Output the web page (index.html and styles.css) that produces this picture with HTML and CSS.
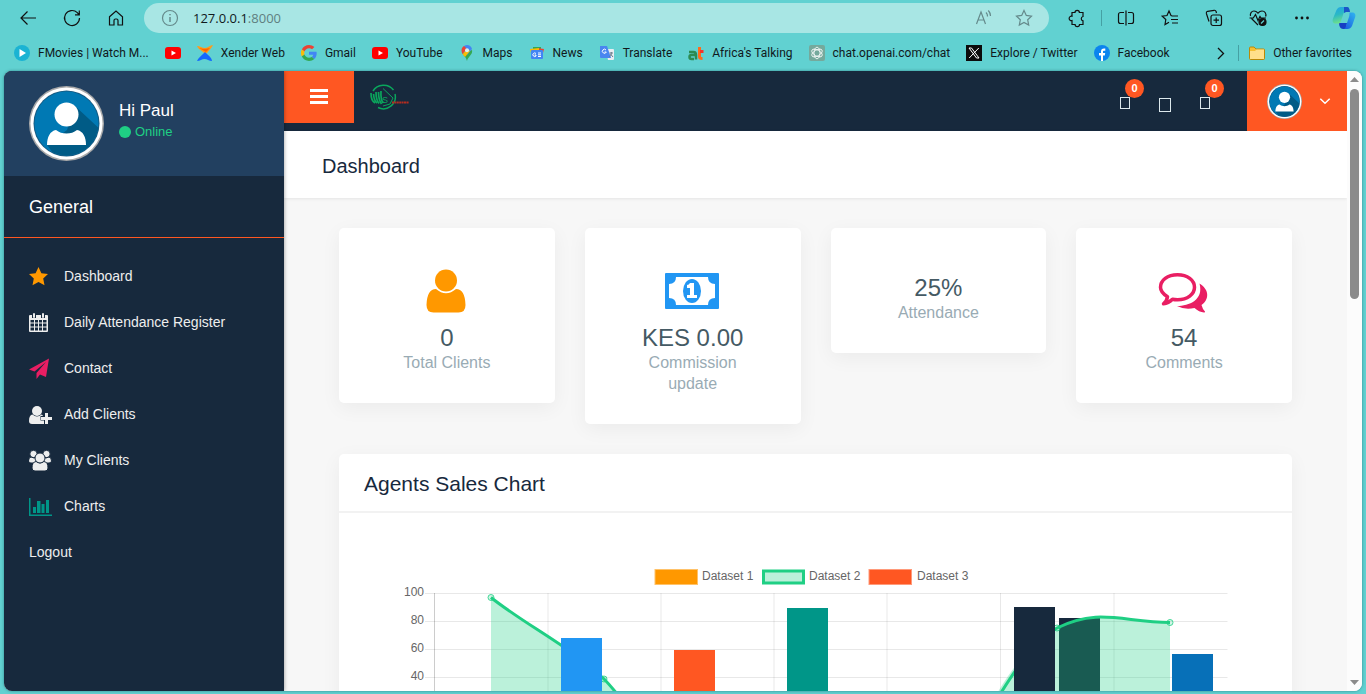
FILE: index.html
```html
<!DOCTYPE html>
<html lang="en">
<head>
<meta charset="utf-8">
<title>Dashboard</title>
<link rel="stylesheet" href="styles.css">
</head>
<body>
<svg class="defs" width="0" height="0" aria-hidden="true">
  <defs>
    <clipPath id="disc"><circle cx="37.5" cy="37.5" r="32"/></clipPath>
    <linearGradient id="co1" x1="0" y1="0" x2="0.3" y2="1"><stop offset="0" stop-color="#1fa3e8"/><stop offset="0.5" stop-color="#2bb9c4"/><stop offset="1" stop-color="#6fe08a"/></linearGradient>
    <linearGradient id="co2" x1="1" y1="0" x2="0.2" y2="1"><stop offset="0" stop-color="#2fb6f0"/><stop offset="1" stop-color="#1b5fe0"/></linearGradient>
    <symbol id="avatar" viewBox="0 0 75 75">
      <circle cx="37.5" cy="37.5" r="37.5" fill="#a9a9a9"/>
      <circle cx="37.5" cy="37.5" r="36" fill="#fff"/>
      <circle cx="37.5" cy="37.5" r="33" fill="#155b83"/>
      <circle cx="37.5" cy="37.5" r="32" fill="#0079b4"/>
      <path clip-path="url(#disc)" fill="#005b86" d="M46 20 75 47V75H30L18 59 38 44z"/>
      <circle cx="37.5" cy="28.500" r="12" fill="#fff"/>
      <path fill="#fff" d="M18 59c0-8 3-14 9-15 3 2.500 6.500 3.500 10.500 3.500S45 46.500 48 44c6 1 9 7 9 15z"/>
    </symbol>
    <symbol id="yt" viewBox="0 0 16 16"><rect y="2" width="16" height="12" rx="3" fill="#f00"/><path d="M6.500 5.500v5L11 8z" fill="#fff"/></symbol>
  </defs>
</svg>

<header class="browser">
  <div class="toolbar">
    <div class="tools">
      <button class="tool" aria-label="Back"><svg viewBox="0 0 20 20"><path d="M18 10H3M9.500 3.500 3 10l6.500 6.500"/></svg></button>
      <button class="tool" aria-label="Refresh"><svg viewBox="0 0 20 20"><path d="M17.500 10a7.500 7.500 0 1 1-2.200-5.300L17 6.500M17.300 2.500v4.300H13"/></svg></button>
      <button class="tool" aria-label="Home"><svg viewBox="0 0 20 20"><path d="M3.500 8.800 10 3l6.500 5.800V17H12v-4.500a1.500 1.500 0 0 0-1.500-1.500h-1A1.500 1.500 0 0 0 8 12.500V17H3.500z"/></svg></button>
    </div>
    <div class="address">
      <svg class="muted" viewBox="0 0 20 20"><circle cx="10" cy="10" r="7.500"/><path d="M10 9v5M10 6v1.300" stroke-width="1.500"/></svg>
      <a class="url" href="http://127.0.0.1:8000/">127.0.0.1<span>:8000</span></a>
      <button class="tool muted" aria-label="Read aloud"><svg viewBox="0 0 20 20"><path d="M2.500 16 7 4l4.500 12M4 12h6M12 4.500a5 5 0 0 1 1.500 4M14.300 2.500A8 8 0 0 1 16.500 8"/></svg></button>
      <button class="tool muted" aria-label="Add to favorites"><svg viewBox="0 0 20 20"><path d="m10 2.500 2.300 4.900 5.200.7-3.800 3.700 1 5.300L10 14.500l-4.700 2.600 1-5.300L2.500 8.100l5.200-.7z"/></svg></button>
    </div>
    <div class="tools">
      <button class="tool" aria-label="Extensions"><svg viewBox="0 0 20 20"><path d="M5 4.500h3a2.200 2.200 0 0 1 4.400 0H16v4a2.200 2.200 0 0 0 0 4.300v3.700h-3.500a2.200 2.200 0 0 1-4.400 0H5v-4a2.200 2.200 0 1 1 0-4.200z"/></svg></button>
      <span class="divider"></span>
      <button class="tool" aria-label="Split screen"><svg viewBox="0 0 20 20"><path d="M8 4.500H4.500a2 2 0 0 0-2 2v7a2 2 0 0 0 2 2H8M12 4.500h3.500a2 2 0 0 1 2 2v7a2 2 0 0 1-2 2H12M10 2.500v15"/></svg></button>
      <button class="tool" aria-label="Favorites"><svg viewBox="0 0 20 20"><path d="M12 7.800 11 7.500 9 3 7 7.500l-4.800.6L5.800 11.500 5 16.500l4-2.300M11.500 8H18M11 11.500H18M12 15h6"/></svg></button>
      <button class="tool" aria-label="Collections"><svg viewBox="0 0 20 20"><rect x="7" y="7" width="10.500" height="10.500" rx="2"/><path d="M12.200 9.500v5.500M9.500 12.200H15M5 13.500l-2.600-8a1.800 1.800 0 0 1 1.200-2.200l6.500-1a1.800 1.800 0 0 1 2 1.200l.4 1.500"/></svg></button>
      <button class="tool" aria-label="Browser essentials"><svg viewBox="0 0 20 20"><path d="M10 17 3.500 10.500M2.500 8C1.800 5.500 3.500 3 6 3c2 0 3 1 4 2.200C11 4 12 3 14 3c3 0 4.600 2.700 3.600 5.500M1.500 10h3.800L7.500 6.500 10 12.500l2-4 1 1.500h5"/><circle cx="14.500" cy="14" r="3.500" fill="#111"/><path d="m13 15.500 3-3" stroke="#61d1d1"/></svg></button>
      <button class="tool" aria-label="More"><svg viewBox="0 0 20 20"><g fill="#111" stroke="none"><circle cx="4.500" cy="10" r="1.400"/><circle cx="10" cy="10" r="1.400"/><circle cx="15.500" cy="10" r="1.400"/></g></svg></button>
      <button class="copilot" aria-label="Copilot"><svg viewBox="0 0 24 24"><path fill="#173fc4" d="M7 17h8l-1 6h-3c-2.500 0-4-3-4-6z"/><path fill="url(#co1)" d="M9 1h6c2 0 2.500 2 3 5h-4c-2 0-2.500 1-3 3l-2 6c-.6 2-1.500 2.500-3 2.500H4c-3 0-4-2-3-5L4.500 4C5.500 2 7 1 9 1z"/><path fill="#1a55c8" d="M12 1h3c2 0 2.500 2 3 5h-4l-2 1z"/><path fill="url(#co2)" d="M17.500 6.500H20c3 0 4 2 3 5l-3 8.500c-1 2-2.500 3-4.500 3H11c2 0 2.500-1 3-3l3-9c.6-2 .5-3 .5-4.500z"/></svg></button>
    </div>
  </div>
  <nav class="bookmarks" aria-label="Favorites bar">
    <a href="#"><svg viewBox="0 0 16 16"><circle cx="8" cy="8" r="8" fill="#1bb3d3"/><path d="M5.500 4v8L12 8z" fill="#fff"/></svg>FMovies | Watch M...</a>
    <a href="#" aria-label="YouTube"><svg><use href="#yt"/></svg></a>
    <a href="#"><svg viewBox="0 0 16 16"><path fill="#ff9c1a" d="M0 1c3 0 5 2 8 2s5-3 8-3c-1 3-4 5-6 8L8 9 6 7C4 5 1 4 0 1z"/><path fill="#f60" d="M2 3c3 1 8 1 11 0L9 7z"/><path fill="#1469ff" d="M0 16c1-3 4-5 6-7l2-2 2 2c2 2 5 4 5 7-3 0-5-2-7.500-2S3 16 0 16z"/></svg>Xender Web</a>
    <a href="#"><svg viewBox="0 0 48 48"><path fill="#ea4335" d="M24 9.500c3.500 0 6.700 1.200 9.200 3.600l6.900-6.900C35.900 2.400 30.500 0 24 0 14.600 0 6.500 5.400 2.600 13.200l8 6.200C12.400 13.700 17.700 9.500 24 9.500z"/><path fill="#4285f4" d="M47 24.500c0-1.600-.2-3.100-.4-4.500H24v9h12.900c-.6 3-2.300 5.500-4.800 7.200l7.700 6C44.400 38 47 31.800 47 24.500z"/><path fill="#fbbc05" d="M10.500 28.600a14.500 14.500 0 0 1 0-9.200l-8-6.200a24 24 0 0 0 0 21.600z"/><path fill="#34a853" d="M24 48c6.500 0 11.900-2.100 15.900-5.800l-7.700-6c-2.200 1.500-4.900 2.300-8.200 2.300-6.300 0-11.600-4.200-13.500-9.900l-8 6.200C6.500 42.600 14.600 48 24 48z"/></svg>Gmail</a>
    <a href="#"><svg><use href="#yt"/></svg>YouTube</a>
    <a href="#"><svg viewBox="0 0 16 16"><path fill="#34a853" d="M13 5c1 5-4 6-5 11C7 12 5 11 3.500 8.500z"/><path fill="#4285f4" d="M5 1c3-2 7-1 8 3L8 10z"/><path fill="#fbbc04" d="M3.500 9 9 4l2 2-5 6z"/><path fill="#ea4335" d="M5 1C2 3 2 6 3.500 9L8 4z"/><circle cx="8" cy="5.300" r="2" fill="#d9f4f4"/></svg>Maps</a>
    <a href="#"><svg viewBox="0 0 16 16"><path fill="#34a853" d="M4 2h8v5H4z"/><path fill="#ea4335" d="m8 3 7 1-1 4z"/><path fill="#fbbc04" d="m1 4 9-1v5H2z"/><rect x="2" y="5" width="12" height="9" rx="1" fill="#4285f4"/><path fill="none" stroke="#fff" d="M7 8.500a1.800 1.800 0 1 0 0 2.500V10H5.500M9 8h3M9 9.800h3M9 11.500h3"/></svg>News</a>
    <a href="#"><svg viewBox="0 0 16 16"><path fill="#e8edf3" d="M7 4h7a1 1 0 0 1 1 1v9a1 1 0 0 1-1 1H9z"/><path fill="#4a86f0" d="M1 1h7l4 12H2a1 1 0 0 1-1-1z"/><path fill="none" stroke="#fff" d="M7 5a2 2 0 1 0 .3 2H5.500"/><path fill="none" stroke="#697d8c" d="M10.500 8H14M12.300 7v1c0 2-1 3-2 4M11.500 9l2.500 3"/></svg>Translate</a>
    <a href="#"><svg viewBox="0 0 16 16"><path fill="none" stroke="#2c8b52" stroke-width="2.500" d="M1 7h4.500Q8 7 8 10v4.500M8 10H3.500a2 2 0 0 0 0 4H6"/><path fill="none" stroke="#ff6b1a" stroke-width="3" d="M11.500 2v10c0 1.500 1 1.500 3 1.500"/><path stroke="#f5352b" stroke-width="3" d="M12 6.500h3.500"/></svg>Africa's Talking</a>
    <a href="#"><svg viewBox="0 0 16 16"><rect width="16" height="16" rx="2" fill="#75a99c"/><g fill="none" stroke="#fff" stroke-width=".8"><ellipse cx="8" cy="8" rx="3" ry="5.800"/><ellipse cx="8" cy="8" rx="3" ry="5.800" transform="rotate(60 8 8)"/><ellipse cx="8" cy="8" rx="3" ry="5.800" transform="rotate(120 8 8)"/></g></svg>chat.openai.com/chat</a>
    <a href="#"><svg viewBox="0 0 16 16"><rect width="16" height="16" fill="#0b0b0b"/><path fill="none" stroke="#fff" d="M3 3h2.500L13 13h-2.500zM12.800 3 3.200 13"/></svg>Explore / Twitter</a>
    <a href="#"><svg viewBox="0 0 16 16"><circle cx="8" cy="8" r="8" fill="#0b84ee"/><path fill="#fff" d="M7 16v-5.500H5V8h2V6.500C7 4.500 8 3.500 10 3.500h1.300v2.200H10c-.7 0-1 .3-1 1V8h2.200l-.4 2.500H9V16z"/></svg>Facebook</a>
    <span class="overflow">
      <button class="more" aria-label="More favorites"><svg viewBox="0 0 10 16"><path d="m2 3 5.500 5.500L2 14"/></svg></button>
      <span class="divider"></span>
      <a href="#"><svg viewBox="0 0 16 16"><path fill="#f5c033" stroke="#b98908" d="M.5 3a1 1 0 0 1 1-1H5l2 2h7.500a1 1 0 0 1 1 1v8.500a1 1 0 0 1-1 1h-13a1 1 0 0 1-1-1z"/><path fill="#ffe08a" d="M1 6h5l1.500-1.500H15V14H1z"/></svg>Other favorites</a>
    </span>
  </nav>
</header>

<div class="page">
  <aside class="sidebar">
    <div class="profile">
      <svg class="avatar" role="img" aria-label="Paul"><use href="#avatar"/></svg>
      <div>
        <div class="greeting">Hi Paul</div>
        <div class="status">Online</div>
      </div>
    </div>
    <h2 class="group">General</h2>
    <nav class="menu">
      <a href="#"><svg viewBox="0 -1 24 24"><path fill="#ff9800" d="m9.500 2 2.900 6.200 6.600.8-4.800 4.600 1.300 6.600-6-3.300-6 3.300 1.300-6.600L0 9l6.600-.8z"/></svg>Dashboard</a>
      <a href="#"><svg viewBox="0 -1 24 24"><path fill="#eee" fill-rule="evenodd" d="M1 4h2v3h4V4h5v3h4V4h2q1 0 1 1v15q0 1-1 1H1q-1 0-1-1V5q0-1 1-1zm.5 5v2.500H5V9zM6 9v2.500h3V9zm4 0v2.500h3V9zm4 0v2.500h3.500V9zM1.500 12.500v3H5v-3zm4.500 0v3h3v-3zm4 0v3h3v-3zm4 0v3h3.500v-3zM1.500 16.500v3H5v-3zm4.500 0v3h3v-3zm4 0v3h3v-3zm4 0v3h3.500v-3z"/><rect x="4" y="2" width="2" height="5" rx="1" fill="#eee"/><rect x="13" y="2" width="2" height="5" rx="1" fill="#eee"/></svg>Daily Attendance Register</a>
      <a href="#"><svg viewBox="0 -1 24 24"><path fill="#e91e63" d="M20 1.500 17 20l-6-2.500L7.500 22V16L17 5 5.500 14.500 0 12.500z"/></svg>Contact</a>
      <a href="#"><svg viewBox="0 -1 24 24"><circle cx="8" cy="8" r="5" fill="#eee"/><path fill="#eee" d="M3.500 11.500Q8 15.500 12.500 11.500q1 .3 1.500 1.500h-2.500v4.500H15V21H3q-3 0-3-3 0-6 3.500-6.500z"/><path fill="#eee" d="M16 10h3v4h4v3h-4v4h-3v-4h-4v-3h4z"/></svg>Add Clients</a>
      <a href="#"><svg viewBox="0 -1 24 24"><g fill="#eee" stroke="#17293d"><circle cx="4.500" cy="5" r="3.700"/><circle cx="17.500" cy="5" r="3.700"/><path d="M2 8q3 2 6 0v6H2q-2.500 0-2.500-2Q-.5 8.500 2 8zM20 8q-3 2-6 0v6h6q2.500 0 2.500-2 0-3.500-2.500-4z"/><path d="M7 12.500q4 3 8 0 4 .5 4 6.500 0 3-3 3H6q-3 0-3-3 0-6 4-6.500z"/><circle cx="11" cy="9" r="5"/></g></svg>My Clients</a>
      <a href="#"><svg viewBox="0 -1 24 24"><path fill="#009688" d="M0 3h1.500v16.500H23V21H0zm4 9h3v6H4zm4-6h3.500v12H8zm4.500 3h3v9h-3zM17 5h3v13h-3z"/></svg>Charts</a>
      <a href="#">Logout</a>
    </nav>
  </aside>

  <main class="content">
    <div class="topbar">
      <button class="toggle" aria-label="Toggle menu"><svg viewBox="0 0 18 16"><path fill="#fff" d="M0 0h18v3H0zm0 6h18v3H0zm0 6h18v3H0z"/></svg></button>
      <svg class="logo" viewBox="0 0 40 27" role="img" aria-label="Logo"><g fill="none" stroke="#0aa65c"><path stroke-width="1.500" d="M3 8A12 11 0 0 1 23.500 7M25 11A12 12 0 0 1 8 24.500"/><path stroke-width="1.700" d="M1 10Q1 18 5 20M3.500 11Q4 18 7 20M6 9Q6 17 9 20.500M8.500 9Q8.500 17 11.500 21M11 8Q10.500 16 13 20"/><path d="M13 5.500 23 15l-3 6-7 2"/></g><text x="12" y="20" class="logo-s">S</text><path stroke="#b32d20" stroke-width="2" stroke-dasharray="2 .4" d="M22 19.500h17"/></svg>
      <div class="alerts">
        <button aria-label="Notifications"><i class="glyph"></i><span class="badge">0</span></button>
        <button aria-label="Settings"><i class="glyph large"></i></button>
        <button aria-label="Messages"><i class="glyph"></i><span class="badge">0</span></button>
      </div>
      <button class="account" aria-label="Account menu"><svg class="avatar-small"><use href="#avatar"/></svg><svg class="chevron" viewBox="0 0 10 6"><path d="m.3.7 4.700 4.600L9.700.7"/></svg></button>
    </div>
    <h1 class="title">Dashboard</h1>
    <div class="body">
      <section class="cards">
        <article class="card">
          <svg class="card-icon" viewBox="1 -1 56 44"><g fill="#ff9800"><circle cx="28" cy="11.500" r="11"/><path d="M18 20q10 8.500 20 0 9 0 9.500 16 0 7.500-7 7.500h-25q-7 0-7-7.500Q9 20 18 20z"/></g></svg>
          <div class="number">0</div><div class="label">Total Clients</div>
        </article>
        <article class="card">
          <svg class="card-icon" viewBox="1 0 56 44"><path fill="#2196f3" fill-rule="evenodd" d="M2 5h52q1 0 1 1v34q0 1-1 1H2q-1 0-1-1V6q0-1 1-1zm10 4q0 7-7 7v14q7 0 7 7h32q0-7 7-7V16q-7 0-7-7z"/><ellipse cx="28" cy="23" rx="9" ry="12" fill="#2196f3"/><path fill="#fff" d="M26 15h4v12h3v3H23v-3h3v-7h-3v-3q2 0 3-2z"/></svg>
          <div class="number">KES 0.00</div><div class="label">Commission update</div>
        </article>
        <article class="card"><div class="number">25%</div><div class="label">Attendance</div></article>
        <article class="card">
          <svg class="card-icon" viewBox="1 0 56 44"><path fill="none" stroke="#e91e63" stroke-width="3.500" stroke-linejoin="round" d="M22.500 6.800c10 0 17 5.500 17 12.500s-7 12.500-17 12.500q-3 0-5-.5-4 4-9 4.500 3.500-3 4-7c-4-2.500-7-5.500-7-9.500 0-7 7-12.500 17-12.500z"/><path fill="#e91e63" d="M44.500 15.500C55 22 54 32 46.500 37q1 4 3.500 6.500.5 1-1 1-5-.5-9.500-4.500-10 2-17.500-2C34 38 49 32 44.500 15.500z"/></svg>
          <div class="number">54</div><div class="label">Comments</div>
        </article>
      </section>
      <section class="panel">
        <h2 class="panel-title">Agents Sales Chart</h2>
        <div class="panel-body">
          <svg class="chart" viewBox="0 0 903 340" role="img" aria-label="Agents sales by dataset">
            <g class="legend">
              <rect x="291" y="15.500" width="42.500" height="15" fill="#ff9800" stroke="#ffc269"/><text x="338" y="26">Dataset 1</text>
              <rect x="399.500" y="17" width="40" height="12" fill="#bbf0da" stroke="#1fcf84" stroke-width="3"/><text x="445" y="26">Dataset 2</text>
              <rect x="505" y="15.500" width="42.500" height="15" fill="#ff5722" stroke="#ff9a7a"/><text x="553" y="26">Dataset 3</text>
            </g>
            <g class="grid">
              <path d="M61 39.500h802.500M61 67.500h802.500M61 95.500h802.500M61 123.500h802.500M61 151.500h802.500M61 179.500h802.500M184 39v280M297 39v280M410 39v280M523 39v280M636.500 39v280M750 39v280"/>
              <path class="axis" d="M70.500 39v280"/>
            </g>
            <g class="ticks"><text x="60" y="42">100</text><text x="60" y="70">80</text><text x="60" y="98">60</text><text x="60" y="126">40</text></g>
            <path fill="#17293d" d="M695 64h41v115h-41z"/>
            <path fill="#1fcf84" fill-opacity=".3" d="M127 179.500v-136C160 70 210 95 240 125c20 18 30 35 38 54.500zM610 179.500C627 150 655 93 693 74c42-21 67-5.500 113-5.500v111z"/>
            <path fill="none" stroke="#1fcf84" stroke-width="3" d="M127 43.500C160 70 210 95 240 125c30 30 80 115 113 115M580 230c30-40 75-137 113-156 42-21 67-5.500 113-5.500"/>
            <g class="points"><circle cx="127" cy="43.500" r="3"/><circle cx="240" cy="125" r="3"/><circle cx="693" cy="74" r="3"/><circle cx="806" cy="68.500" r="3"/></g>
            <path fill="#2196f3" d="M197 84h41v95h-41z"/>
            <path fill="#ff5722" d="M310 96h41v83h-41z"/>
            <path fill="#009688" d="M423 54h41v125h-41z"/>
            <path fill="#17293d" d="M650 53h41v126h-41z"/>
            <path fill="#0770b8" d="M808 100h41v79h-41z"/>
          </svg>
        </div>
      </section>
    </div>
  </main>

  <div class="scrollbar" aria-hidden="true">
    <svg viewBox="0 0 9 5"><path d="M0 5 4.500 0 9 5z"/></svg>
    <div class="track"><div class="thumb"></div></div>
    <svg viewBox="0 0 9 5"><path d="m0 0 4.500 5L9 0z"/></svg>
  </div>
</div>
</body>
</html>
```

FILE: styles.css
```css
* { box-sizing: border-box; }

body {
  margin: 0;
  height: 100vh;
  display: flex;
  flex-direction: column;
  overflow: hidden;
  background: #61d1d1;
  font-family: "Liberation Sans", Arial, sans-serif;
}

button {
  padding: 0;
  border: 0;
  background: none;
  font: inherit;
  color: inherit;
}

a { color: inherit; text-decoration: none; }
svg { display: block; flex: none; }
.defs { position: absolute; }

/* Browser bars */
.browser {
  flex: none;
  height: 71px;
  font-family: "Open Sans", "Noto Sans", sans-serif;
  color: #10191c;
}

.toolbar {
  display: flex;
  align-items: center;
  gap: 18px;
  height: 36px;
  padding: 0 10px 0 18px;
}

.tools { display: flex; align-items: center; gap: 24px; }
.tool, .tool svg, .address > svg { width: 20px; height: 20px; }
.tool svg, .address > svg { fill: none; stroke: #111; stroke-width: 1.2; }
.muted svg, .address > svg.muted { stroke: #658a8b; }
.divider { width: 1px; height: 16px; margin: 0 -10px; background: #45a0a3; }
.copilot { margin-left: -4px; }
.copilot svg { width: 24px; height: 24px; }

.address {
  flex: 1;
  display: flex;
  align-items: center;
  gap: 20px;
  height: 30px;
  padding: 0 15px 0 16px;
  border-radius: 15px;
  background: #a8e6e4;
}

.url { flex: 1; margin-left: -7px; font-size: 13px; }
.url span { color: #5f7f80; }

.bookmarks {
  display: flex;
  align-items: center;
  gap: 16px;
  height: 34px;
  padding: 0 14px;
  font-family: Roboto, "Open Sans", sans-serif;
  font-size: 12px;
  white-space: nowrap;
}

.bookmarks a { display: flex; align-items: center; gap: 8px; }
.bookmarks a svg { width: 16px; height: 16px; }
.overflow { display: flex; align-items: center; gap: 12px; margin-left: auto; }
.overflow .divider { margin: 0 -2px 0 0; }
.more svg { width: 10px; height: 16px; fill: none; stroke: #111; stroke-width: 1.3; }

/* Web page */
.page {
  flex: 1;
  min-height: 0;
  display: flex;
  margin: 0 4px 3px;
  border-radius: 8px;
  overflow: hidden;
  background: #f7f7f7;
  box-shadow: 0 0 3px rgba(0, 60, 70, 0.5);
}

.sidebar {
  flex: none;
  width: 280px;
  background: #17293d;
  color: #eee;
  box-shadow: 0 0 4px rgba(0, 0, 0, 0.4);
  z-index: 1;
}

.profile {
  display: flex;
  gap: 15px;
  height: 105px;
  padding: 15px 25px;
  background: #224060;
}

.avatar { width: 75px; height: 75px; }
.greeting { padding-top: 15px; font-size: 17px; line-height: 20px; color: #fff; }

.status {
  display: flex;
  align-items: center;
  gap: 4px;
  font-size: 13px;
  line-height: 22px;
  color: #1fcf84;
}

.status::before {
  content: "";
  width: 12px;
  height: 12px;
  border-radius: 50%;
  background: #1fcf84;
}

.group {
  margin: 0;
  padding: 21px 25px 19px;
  border-bottom: 1px solid #ff5722;
  font-size: 18px;
  font-weight: 400;
  line-height: 21px;
  color: #fff;
}

.menu { padding-top: 15px; font-size: 14px; }
.menu a { display: flex; align-items: center; gap: 11px; height: 46px; padding: 0 25px; }
.menu svg { width: 24px; height: 24px; }

.content { flex: 1; min-width: 0; }
.topbar { display: flex; height: 60px; background: #17293d; }

.toggle {
  display: flex;
  justify-content: center;
  align-items: center;
  width: 70px;
  height: 52px;
  background: #ff5722;
}

.toggle svg { width: 18px; height: 16px; }
.logo { width: 40px; height: 27px; margin: 12px 16px; }
.logo-s { font: 9px "Liberation Sans", sans-serif; fill: #0aa65c; }

.alerts { display: flex; margin-left: auto; padding-right: 22px; }
.alerts button { position: relative; display: flex; justify-content: center; align-items: center; width: 40px; }
.glyph { width: 10px; height: 12px; margin-top: 4px; border: 1px solid #dce8ec; }
.glyph.large { width: 12px; height: 14px; margin-top: 8px; }

.badge {
  position: absolute;
  top: 8px;
  left: 20px;
  width: 19px;
  height: 19px;
  border-radius: 50%;
  background: #ff5722;
  color: #fff;
  font-size: 11px;
  font-weight: 700;
  line-height: 19px;
  text-align: center;
}

.account {
  display: flex;
  align-items: center;
  gap: 18px;
  padding: 0 17px 0 20px;
  background: #ff5722;
}

.avatar-small { width: 35px; height: 35px; }
.chevron { width: 10px; height: 6px; fill: none; stroke: #fff; stroke-width: 1.5; overflow: visible; }

.title {
  margin: 0;
  padding: 24px 38px 20px;
  background: #fff;
  box-shadow: 0 1px 3px rgba(0, 0, 0, 0.08);
  font-size: 20px;
  font-weight: 400;
  line-height: 23px;
  color: #17293d;
}

.body { padding: 30px 55px; }
.cards { display: grid; grid-template-columns: repeat(4, 1fr); align-items: start; gap: 30px; }

.card, .panel {
  border-radius: 5px;
  background: #fff;
  box-shadow: 0 5px 20px rgba(0, 0, 0, 0.05);
}

.card { padding: 40px 50px 30px; text-align: center; }
.card-icon { width: 56px; height: 44px; margin: 0 auto 6px; overflow: visible; }
.number { padding-top: 6px; font-size: 24px; line-height: 28px; color: #455a64; white-space: nowrap; }
.label { font-size: 16px; line-height: 21px; color: #99abb4; }

.panel { margin-top: 30px; }

.panel-title {
  margin: 0;
  padding: 18px 25px 15px;
  border-bottom: 2px solid #f2f2f2;
  font-size: 21px;
  font-weight: 400;
  line-height: 24px;
  color: #17293d;
}

.panel-body { padding: 41px 25px 25px; }
.chart { width: 100%; height: auto; font-size: 12px; }
.chart text { fill: #666; }
.grid { fill: none; stroke: rgba(0, 0, 0, 0.09); }
.axis { stroke: rgba(0, 0, 0, 0.2); }
.ticks { text-anchor: end; }
.points { fill: rgba(31, 207, 132, 0.2); stroke: rgba(31, 207, 132, 0.8); }

.scrollbar {
  flex: none;
  display: flex;
  flex-direction: column;
  align-items: center;
  gap: 7px;
  width: 15px;
  padding: 6px 0;
  background: #fcfcfc;
}

.scrollbar svg { width: 9px; height: 5px; fill: #8b8b8b; }
.track { flex: 1; }
.thumb { width: 9px; height: 36%; border-radius: 5px; background: #8b8b8b; }
```
